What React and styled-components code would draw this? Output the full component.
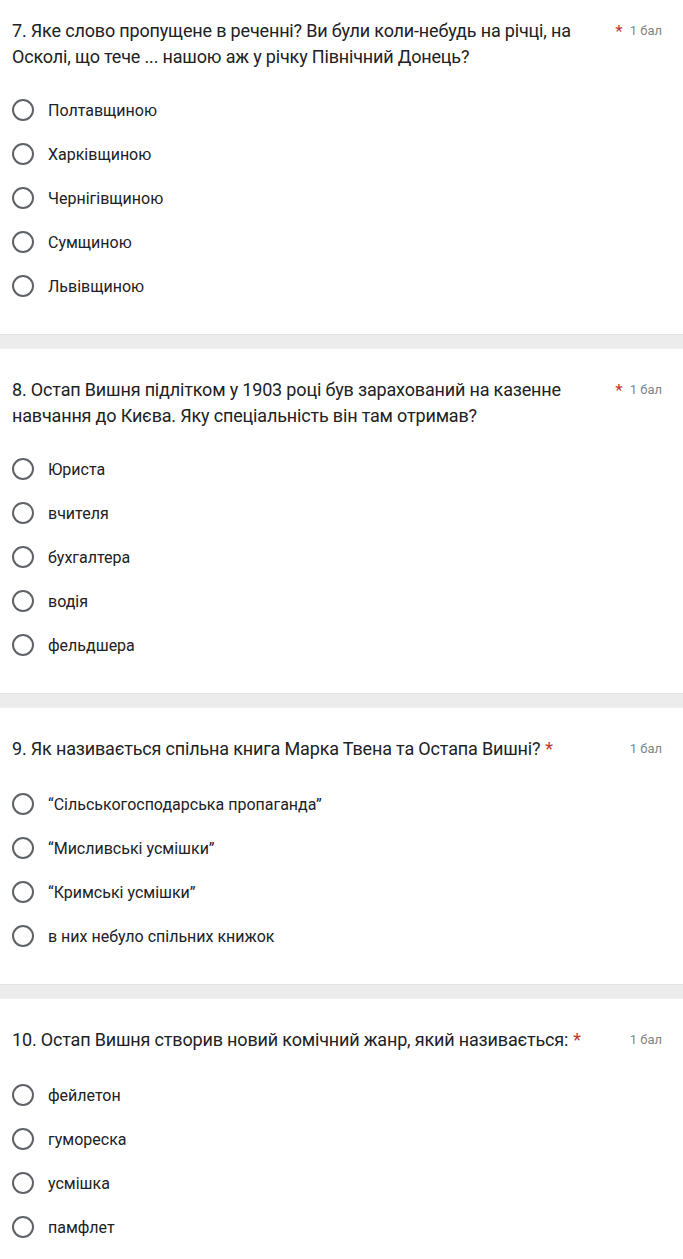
import React from "react";
import styled, { createGlobalStyle } from "styled-components";

const Global = createGlobalStyle`
  html, body { margin: 0; padding: 0; background: #fff; }
  body { font-family: Roboto, "Noto Sans", Arial, sans-serif; color: #202124; }
`;

const Page = styled.div`
  width: 683px;
  display: flex;
  flex-direction: column;
`;

const Card = styled.section`
  background: #fff;
  padding: ${(p) => (p.$first ? "18px" : "28px")} 21px 37px 12px;
`;

const Divider = styled.div`
  height: 13px;
  background: #ececec;
  border-top: 1px solid #e2e2e2;
  border-bottom: 1px solid #f0f0f0;
`;

const Header = styled.div`
  display: flex;
  align-items: flex-start;
  justify-content: space-between;
`;

const Title = styled.div`
  flex: 1;
  max-width: 600px;
  font-size: 18px;
  line-height: 26px;
  letter-spacing: -0.17px;
  color: #202124;
`;

const Star = styled.span`
  color: #c0392b;
  margin-left: 5px;
`;

const Points = styled.div`
  display: flex;
  align-items: center;
  gap: 7px;
  padding-top: 2px;
  font-size: 13px;
  line-height: 22px;
  color: #80868b;
  white-space: nowrap;
`;

const PointsStar = styled.span`
  color: #c0392b;
  font-size: 17px;
`;

const Options = styled.div`
  display: flex;
  flex-direction: column;
  gap: 22px;
  margin-top: ${(p) => (p.$single ? "31px" : "29px")};
`;

const Option = styled.label`
  display: flex;
  align-items: center;
  gap: 14px;
  height: 22px;
  font-size: 16px;
  color: #202124;
`;

const Radio = styled.span`
  width: 18px;
  height: 18px;
  border: 2px solid #5f6368;
  border-radius: 50%;
  flex: none;
`;

const questions = [
  {
    title:
      "7. Яке слово пропущене в реченні? Ви були коли-небудь на річці, на Осколі, що тече ... нашою аж у річку Північний Донець?",
    starRight: true,
    options: ["Полтавщиною", "Харківщиною", "Чернігівщиною", "Сумщиною", "Львівщиною"],
  },
  {
    title:
      "8. Остап Вишня підлітком у 1903 році був зарахований на казенне навчання до Києва. Яку спеціальність він там отримав?",
    starRight: true,
    options: ["Юриста", "вчителя", "бухгалтера", "водія", "фельдшера"],
  },
  {
    title: "9. Як називається спільна книга Марка Твена та Остапа Вишні?",
    starRight: false,
    options: [
      "“Сільськогосподарська пропаганда”",
      "“Мисливські усмішки”",
      "“Кримські усмішки”",
      "в них небуло спільних книжок",
    ],
  },
  {
    title: "10. Остап Вишня створив новий комічний жанр, який називається:",
    starRight: false,
    options: ["фейлетон", "гумореска", "усмішка", "памфлет"],
  },
];

function Question({ q, first }) {
  return (
    <Card $first={first}>
      <Header>
        <Title>
          {q.title}
          {!q.starRight && <Star>*</Star>}
        </Title>
        <Points>
          {q.starRight && <PointsStar>*</PointsStar>}
          <span>1 бал</span>
        </Points>
      </Header>
      <Options $single={!q.starRight}>
        {q.options.map((o) => (
          <Option key={o}>
            <Radio />
            <span>{o}</span>
          </Option>
        ))}
      </Options>
    </Card>
  );
}

export default function App() {
  return (
    <Page>
      <Global />
      {questions.map((q, i) => (
        <React.Fragment key={i}>
          {i > 0 && <Divider />}
          <Question q={q} first={i === 0} />
        </React.Fragment>
      ))}
    </Page>
  );
}
